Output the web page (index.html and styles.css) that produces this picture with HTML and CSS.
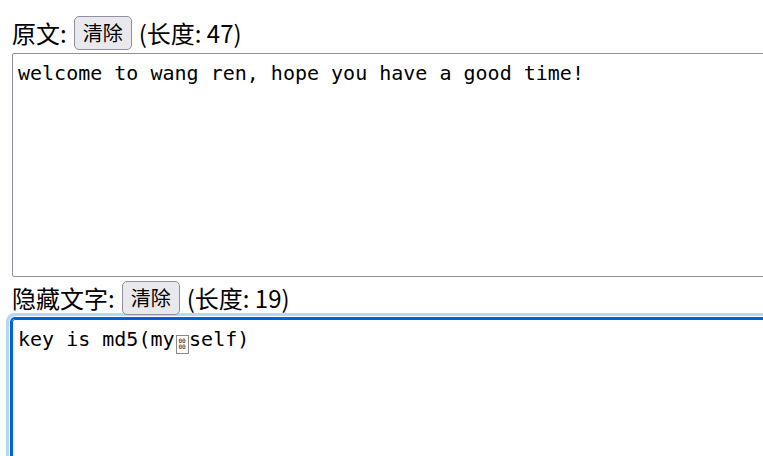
FILE: index.html
```html
<!DOCTYPE html>
<html lang="zh">
<head>
<meta charset="utf-8">
<link rel="stylesheet" href="styles.css">
</head>
<body>
<div class="row row-first">
  <span class="label">原文:</span>
  <button class="btn">清除</button>
  <span class="label">(长度: 47)</span>
</div>
<div class="area area-plain">welcome to wang ren, hope you have a good time!</div>
<div class="row row-second">
  <span class="label">隐藏文字:</span>
  <button class="btn">清除</button>
  <span class="label">(长度: 19)</span>
</div>
<div class="area area-focus">key is md5(my<span class="tofu"><span class="tofu-line">00</span><span class="tofu-line">00</span></span>self)</div>
</body>
</html>
```
FILE: styles.css
```css
html, body {
  margin: 0;
  padding: 0;
  background: #fff;
  overflow: hidden;
}
body {
  padding: 12px 0 0 12px;
  width: 900px;
  font-family: "Noto Sans CJK SC", "Noto Sans", sans-serif;
  color: #000;
}
.row {
  display: flex;
  align-items: center;
  gap: 7px;
}
.row-first { height: 41px; }
.row-second { height: 42px; }
.label {
  font-size: 24px;
  line-height: 1;
  white-space: pre;
}
.btn {
  height: 34px;
  padding: 0 8px;
  font-family: "Noto Sans CJK SC", sans-serif;
  font-size: 20px;
  line-height: 1;
  color: #000;
  background: #e9e9ed;
  border: 1px solid #8f8f9d;
  border-radius: 5px;
}
.area {
  box-sizing: border-box;
  width: 820px;
  border: 1px solid #8f8f9d;
  padding: 4px 5px;
  font-family: "DejaVu Sans Mono", monospace;
  font-size: 20px;
  line-height: 30px;
  white-space: pre;
  color: #000;
}
.area-plain {
  height: 224px;
  border-radius: 2px;
}
.area-focus {
  height: 200px;
  border-color: #0060df;
  border-radius: 3px;
  box-shadow: 0 0 0 2px #0060df, 0 0 0 3px #fff, 0 0 0 6px #b3d9f5;
}
.tofu {
  display: inline-block;
  box-sizing: border-box;
  width: 13px;
  height: 19px;
  margin: 0 0.5px 0 1px;
  padding-top: 2px;
  vertical-align: -3px;
  border: 1px solid #8a8a8a;
  text-align: center;
  font-family: "DejaVu Sans Mono", monospace;
  font-size: 6px;
  line-height: 6px;
  letter-spacing: 0;
  color: #000;
}
.tofu-line {
  display: block;
}
```
